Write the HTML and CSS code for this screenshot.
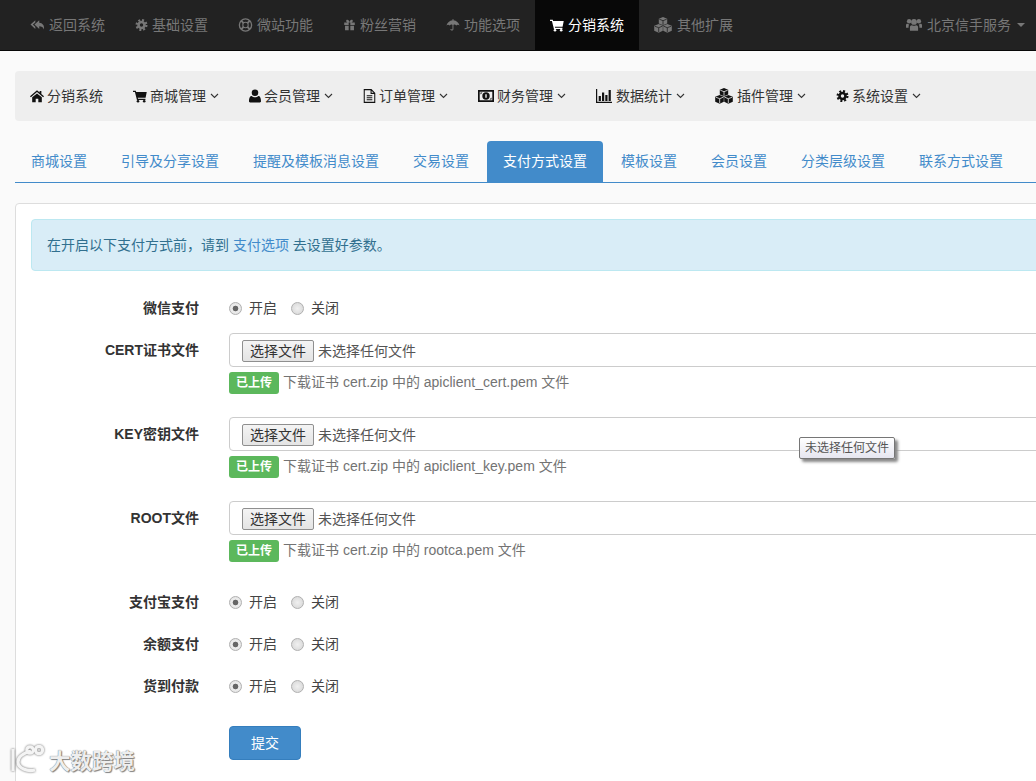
FILE: index.html
```html
<!DOCTYPE html>
<html lang="zh-CN">
<head>
<meta charset="utf-8">
<title>支付方式设置</title>
<link rel="stylesheet" href="styles.css">
</head>
<body>
<svg class="sprite" xmlns="http://www.w3.org/2000/svg">
  <symbol id="i-reply" viewBox="0 0 16 16"><path d="M5.500 2.500 0 7.500l5.500 5v-2.600l-2.800-2.400 2.800-2.400zM10 2.500l-5.500 5 5.500 5V9.400c2.700 0 4.200.8 5.300 3.600.9-4.700-1.600-7.400-5.300-7.700z"/></symbol>
  <symbol id="i-cog" viewBox="0 0 16 16"><circle cx="8" cy="8" r="3.700" fill="none" stroke="currentColor" stroke-width="3.200"/><circle cx="8" cy="8" r="6" fill="none" stroke="currentColor" stroke-width="2.800" stroke-dasharray="2.400 2.310"/></symbol>
  <symbol id="i-ring" viewBox="0 0 16 16"><circle cx="8" cy="8" r="7" fill="none" stroke="currentColor" stroke-width="1.500"/><circle cx="8" cy="8" r="3.100" fill="none" stroke="currentColor" stroke-width="1.200"/><path d="m3 3 2.800 2.800m4.400 4.400L13 13m0-10-2.800 2.800m-4.400 4.400L3 13" stroke="currentColor" stroke-width="2.200"/></symbol>
  <symbol id="i-gift" viewBox="0 0 16 16"><path d="M1.500 5H7v3H1.500zM9 5h5.500v3H9zM2.500 9H7v5.500H2.500zM9 9h4.500v5.500H9zM7 5C3.500 5 3 1.500 5.300 1.500 7 1.500 8 3.500 8 5c0-1.500 1-3.500 2.700-3.500C13 1.500 12.500 5 9 5z"/></symbol>
  <symbol id="i-umbrella" viewBox="0 0 16 16"><path d="M7.500 1h1v1.600c3.500.3 6 2.700 7 5.900-1.200-1.200-2.800-1.200-3.800.2-1-1.300-2.200-1.500-3.200-.7v4.500c0 2.300-3.500 2.300-3.500 0h1.100c0 1 1.300 1 1.300 0V8c-1-.8-2.200-.6-3.200.7C3.200 7.300 1.700 7.300.5 8.500c1-3.200 3.500-5.600 7-5.900z"/></symbol>
  <symbol id="i-cart" viewBox="0 0 16 16"><path d="M0 2h3.200l.4 1.500h12.100l-1.300 6.400H5.500l.3 1.100h8.400v1.500H4.500L2.200 3.500H0z"/><circle cx="5.700" cy="14" r="1.500"/><circle cx="12.800" cy="14" r="1.500"/></symbol>
  <symbol id="i-cubes" viewBox="0 0 18 16"><path d="M9 0l4.200 1.700v4.700L9 8.200 4.800 6.400V1.700zM4.700 7l4.100 1.700v5.100l-4.100 1.900-4.500-1.900V8.700zM13.300 7l4.500 1.700v5.100l-4.500 1.900-4.100-1.900V8.700z"/><path class="cube-line" d="M5.300 2.200 9 3.700l3.700-1.500M9 3.700v4.200M.8 9.200l3.900 1.500 3.600-1.500M4.700 10.700v4.500M9.700 9.200l3.600 1.500 3.900-1.500M13.300 10.700v4.500" fill="none" stroke-width=".8"/></symbol>
  <symbol id="i-users" viewBox="0 0 18 16"><circle cx="9" cy="4.500" r="3.300"/><circle cx="3.500" cy="3.800" r="2.500"/><circle cx="14.500" cy="3.800" r="2.500"/><path d="M4.400 14.500V10.500C4.400 9 5.600 8 6.800 8.200c1.400.9 3 .9 4.400 0 1.200-.2 2.400.8 2.400 2.300v4zM0 11V8.300C0 7 .8 6.500 1.800 6.500c.6.500 1.200.8 1.900.8-.6.800-.8 1.700-.8 3.200V11zM18 11V8.300C18 7 17.200 6.500 16.200 6.500c-.6.500-1.200.8-1.900.8.600.8.800 1.700.8 3.200V11z"/></symbol>
  <symbol id="i-home" viewBox="0 0 16 16"><path d="M8 1.500 0 8.200l1 1.100 7-5.800 7 5.800 1-1.100-3-2.500V2.300h-2v1.800zM2.500 9.500 8 5l5.500 4.500V15h-4v-4h-3v4h-4z"/></symbol>
  <symbol id="i-user" viewBox="0 0 14 16"><circle cx="7" cy="4.200" r="3.800"/><path d="M1.300 15.500C.5 15.500 0 15 0 14.200c0-3.200.8-6.200 3-6.200 1 1 2.500 1.600 4 1.600s3-.6 4-1.600c2.200 0 3 3 3 6.200 0 .8-.5 1.300-1.300 1.300z"/></symbol>
  <symbol id="i-file" viewBox="0 0 14 16"><path d="M1 .7h8l4 4v10.600H1zM8.800 1v4h4.200M3.800 7.800h6.400M3.800 10h6.400M3.800 12.300h6.400" fill="none" stroke="currentColor" stroke-width="1.200"/></symbol>
  <symbol id="i-money" viewBox="0 0 16 12"><path fill-rule="evenodd" d="M0 0h16v12H0zM1.700 1.700v8.600h12.600V1.700z"/><circle cx="8" cy="6" r="3.700"/><path class="money-mark" d="M7.300 4.200h1.400v3.600H7.300z"/><path d="M2.500 2.500h2l-2 2zM13.500 9.500h-2l2-2z"/></symbol>
  <symbol id="i-chart" viewBox="0 0 16 14"><path d="M0 0h1.200v12.700H16V14H0zM2.700 7h2.200v5H2.700zM6 3.500h2.200V12H6zM9.300 6h2.200v6H9.300zM12.600 1h2.200v11h-2.200z"/></symbol>
</svg>

<header class="topbar">
  <nav class="topnav">
    <a class="topitem"><svg class="ico w15"><use href="#i-reply"/></svg>返回系统</a>
    <a class="topitem"><svg class="ico w13"><use href="#i-cog"/></svg>基础设置</a>
    <a class="topitem"><svg class="ico w15"><use href="#i-ring"/></svg>微站功能</a>
    <a class="topitem"><svg class="ico w13"><use href="#i-gift"/></svg>粉丝营销</a>
    <a class="topitem"><svg class="ico w14"><use href="#i-umbrella"/></svg>功能选项</a>
    <a class="topitem active"><svg class="ico w14"><use href="#i-cart"/></svg>分销系统</a>
    <a class="topitem"><svg class="ico w18 tall gap5"><use href="#i-cubes"/></svg>其他扩展</a>
  </nav>
  <a class="topuser"><svg class="ico w16 tall gap5"><use href="#i-users"/></svg>北京信手服务<span class="caret"></span></a>
</header>

<main class="content">
  <nav class="subnav">
    <a class="subitem"><svg class="ico w14"><use href="#i-home"/></svg>分销系统</a>
    <a class="subitem"><svg class="ico w14"><use href="#i-cart"/></svg>商城管理<svg class="chev" viewBox="0 0 9 6"><path d="m1 1 3.500 3.500L8 1"/></svg></a>
    <a class="subitem"><svg class="ico w12"><use href="#i-user"/></svg>会员管理<svg class="chev" viewBox="0 0 9 6"><path d="m1 1 3.500 3.500L8 1"/></svg></a>
    <a class="subitem"><svg class="ico w13"><use href="#i-file"/></svg>订单管理<svg class="chev" viewBox="0 0 9 6"><path d="m1 1 3.500 3.500L8 1"/></svg></a>
    <a class="subitem"><svg class="ico w16"><use href="#i-money"/></svg>财务管理<svg class="chev" viewBox="0 0 9 6"><path d="m1 1 3.500 3.500L8 1"/></svg></a>
    <a class="subitem"><svg class="ico w16 gap4"><use href="#i-chart"/></svg>数据统计<svg class="chev" viewBox="0 0 9 6"><path d="m1 1 3.500 3.500L8 1"/></svg></a>
    <a class="subitem"><svg class="ico w18 tall gap4"><use href="#i-cubes"/></svg>插件管理<svg class="chev" viewBox="0 0 9 6"><path d="m1 1 3.500 3.500L8 1"/></svg></a>
    <a class="subitem"><svg class="ico w13"><use href="#i-cog"/></svg>系统设置<svg class="chev" viewBox="0 0 9 6"><path d="m1 1 3.500 3.500L8 1"/></svg></a>
  </nav>

  <ul class="tabs">
    <li class="tab">商城设置</li>
    <li class="tab">引导及分享设置</li>
    <li class="tab">提醒及模板消息设置</li>
    <li class="tab">交易设置</li>
    <li class="tab current">支付方式设置</li>
    <li class="tab">模板设置</li>
    <li class="tab">会员设置</li>
    <li class="tab">分类层级设置</li>
    <li class="tab">联系方式设置</li>
  </ul>

  <section class="panel">
    <div class="alert">在开启以下支付方式前，请到 <a class="alert-link">支付选项</a> 去设置好参数。</div>

    <div class="row">
      <div class="label">微信支付</div>
      <div class="radios"><label class="radio"><input type="radio" name="wx" checked>开启</label><label class="radio"><input type="radio" name="wx">关闭</label></div>
    </div>

    <div class="row">
      <div class="label">CERT证书文件</div>
      <div>
        <div class="file"><button class="file-btn" type="button">选择文件</button>未选择任何文件</div>
        <div class="help"><span class="badge">已上传</span>下载证书 cert.zip 中的 apiclient_cert.pem 文件</div>
      </div>
    </div>

    <div class="row">
      <div class="label">KEY密钥文件</div>
      <div>
        <div class="file"><button class="file-btn" type="button">选择文件</button>未选择任何文件</div>
        <div class="help"><span class="badge">已上传</span>下载证书 cert.zip 中的 apiclient_key.pem 文件</div>
      </div>
    </div>

    <div class="row">
      <div class="label">ROOT文件</div>
      <div>
        <div class="file"><button class="file-btn" type="button">选择文件</button>未选择任何文件</div>
        <div class="help"><span class="badge">已上传</span>下载证书 cert.zip 中的 rootca.pem 文件</div>
      </div>
    </div>

    <div class="row">
      <div class="label">支付宝支付</div>
      <div class="radios"><label class="radio"><input type="radio" name="ali" checked>开启</label><label class="radio"><input type="radio" name="ali">关闭</label></div>
    </div>

    <div class="row">
      <div class="label">余额支付</div>
      <div class="radios"><label class="radio"><input type="radio" name="bal" checked>开启</label><label class="radio"><input type="radio" name="bal">关闭</label></div>
    </div>

    <div class="row">
      <div class="label">货到付款</div>
      <div class="radios"><label class="radio"><input type="radio" name="cod" checked>开启</label><label class="radio"><input type="radio" name="cod">关闭</label></div>
    </div>

    <div class="row actions">
      <div></div>
      <div><button class="submit" type="button">提交</button></div>
    </div>
  </section>
</main>

<div class="tooltip">未选择任何文件</div>

<div class="watermark">
  <svg class="wm-logo" viewBox="0 0 36 30"><path d="M3 4v22M21 6C14 8 8 12 8 17c0 6 9 10 17 8"/><circle cx="20" cy="5" r="3.200"/><circle cx="29" cy="5" r="3.600"/></svg>
  <span class="wm-text">大数跨境</span>
</div>
</body>
</html>
```

FILE: styles.css
```css
* { box-sizing: border-box; }

html, body {
  margin: 0;
  padding: 0;
  width: 1036px;
  height: 781px;
  overflow: hidden;
}

body {
  position: relative;
  background: #fafafa;
  color: #333;
  font: 14px/20px "Liberation Sans", "Noto Sans CJK SC", sans-serif;
}

.sprite { display: none; }

.ico {
  height: 14px;
  margin-right: 3px;
  fill: currentColor;
  flex: none;
}
.w12 { width: 12px; }
.w13 { width: 13px; }
.w14 { width: 14px; }
.w15 { width: 15px; }
.w16 { width: 16px; }
.w18 { width: 18px; }
.ico.tall { height: 16px; }
.ico.gap4 { margin-right: 4px; }
.ico.gap5 { margin-right: 5px; }

.cube-line { stroke: var(--cube-line, #eee); }
.money-mark { fill: var(--cube-line, #eee); }

/* top bar */
.topbar {
  --cube-line: #222;
  display: flex;
  justify-content: space-between;
  height: 51px;
  background: #222;
  border-bottom: 1px solid #080808;
}
.topnav { display: flex; padding-left: 15px; }
.topitem {
  display: flex;
  align-items: center;
  padding: 0 15px;
  color: #777;
}
.topitem .ico { margin-right: 4px; }
.topitem .ico.gap5 { margin-right: 5px; }
.topitem.active { background: #080808; color: #fff; }
.topuser {
  display: flex;
  align-items: center;
  padding-right: 11px;
  color: #777;
}
.caret {
  margin-left: 6px;
  border-top: 4px solid #777;
  border-left: 4px solid transparent;
  border-right: 4px solid transparent;
}

/* page content runs past the right edge of the window */
.content {
  --cube-line: #eee;
  width: 1400px;
  margin: 20px 0 0 15px;
}

.subnav {
  display: flex;
  height: 50px;
  background: #eee;
  border-radius: 4px;
  margin-bottom: 20px;
}
.subitem {
  display: flex;
  align-items: center;
  padding: 0 15px;
  color: #333;
  white-space: nowrap;
}
.subitem .ico { fill: #111; color: #111; }
.chev {
  width: 9px;
  height: 6px;
  margin-left: 4px;
  fill: none;
  stroke: #333;
  stroke-width: 1.100;
}

/* tabs */
.tabs {
  display: flex;
  margin: 0 0 20px;
  padding: 0;
  list-style: none;
  border-bottom: 1px solid #428bca;
  height: 42px;
}
.tab {
  padding: 10px 16px 11px;
  margin-right: 2px;
  height: 41px;
  color: #428bca;
  border-radius: 4px 4px 0 0;
  white-space: nowrap;
}
.tab.current { background: #428bca; color: #fff; }

/* panel */
.panel {
  padding: 15px;
  background: #fff;
  border: 1px solid #ddd;
  border-radius: 4px;
  height: 700px;
}

.alert {
  height: 52px;
  padding: 15px;
  margin-bottom: 20px;
  background: #d9edf7;
  border: 1px solid #bce8f1;
  border-radius: 4px;
  color: #31708f;
}
.alert-link { color: #428bca; }

.row {
  display: grid;
  grid-template-columns: 168px 1fr;
  column-gap: 30px;
  margin-bottom: 15px;
}
.label {
  padding-top: 7px;
  text-align: right;
  font-weight: bold;
  white-space: nowrap;
}

.radios {
  display: flex;
  gap: 14px;
  height: 27px;
  padding-top: 7px;
}
.radio { display: flex; align-items: center; height: 20px; color: #444; }
.radio input {
  appearance: none;
  width: 13px;
  height: 13px;
  margin: 0 7px 0 0;
  border: 1px solid #b0b0b0;
  border-radius: 50%;
  background: radial-gradient(circle, #f0f0f0, #d4d4d4);
}
.radio input:checked {
  background: radial-gradient(circle, #666 0 2.500px, #eee 3.200px, #ddd 100%);
}

.file {
  display: flex;
  align-items: center;
  width: 1200px;
  height: 34px;
  padding: 2px 0 0 12px;
  border: 1px solid #ccc;
  border-radius: 4px;
  color: #555;
  background: #fff;
}
.file-btn {
  width: 72px;
  height: 22px;
  margin-right: 4px;
  padding: 0;
  font: inherit;
  line-height: 20px;
  color: #333;
  background: linear-gradient(#f4f4f4, #e4e4e4);
  border: 1px solid #8f8f8f;
  border-radius: 2px;
}

.help {
  display: flex;
  align-items: center;
  height: 20px;
  margin: 5px 0 10px;
  color: #737373;
  white-space: pre;
}
.badge {
  display: inline-block;
  width: 50px;
  height: 22px;
  margin: 2px 4px 0 0;
  background: #5cb85c;
  border-radius: 3px;
  color: #fff;
  font-size: 12px;
  font-weight: bold;
  line-height: 22px;
  text-align: center;
}

.actions { margin-top: 30px; }
.submit {
  width: 72px;
  height: 34px;
  padding: 0;
  font: inherit;
  color: #fff;
  background: #428bca;
  border: 1px solid #357ebd;
  border-radius: 4px;
}

/* overlays */
.tooltip {
  position: absolute;
  left: 799px;
  top: 437px;
  width: 96px;
  height: 22px;
  padding-left: 5px;
  font-size: 12px;
  line-height: 20px;
  color: #555;
  background: linear-gradient(#fff, #e6e6f0);
  border: 1px solid #767676;
  border-radius: 2px;
  box-shadow: 3px 3px 3px #888;
}

.watermark {
  position: absolute;
  left: 10px;
  top: 745px;
  display: flex;
  align-items: center;
  gap: 3px;
}
.wm-logo {
  width: 36px;
  height: 30px;
  fill: none;
  stroke: #f4f4f4;
  stroke-width: 3.200;
  filter: drop-shadow(0 0 1px #666);
}
.wm-text {
  font: bold 21.500px/30px "Noto Sans CJK SC", sans-serif;
  color: #eee;
  text-shadow: 0 0 1px #555, 1px 1px 1px #888;
}
```
